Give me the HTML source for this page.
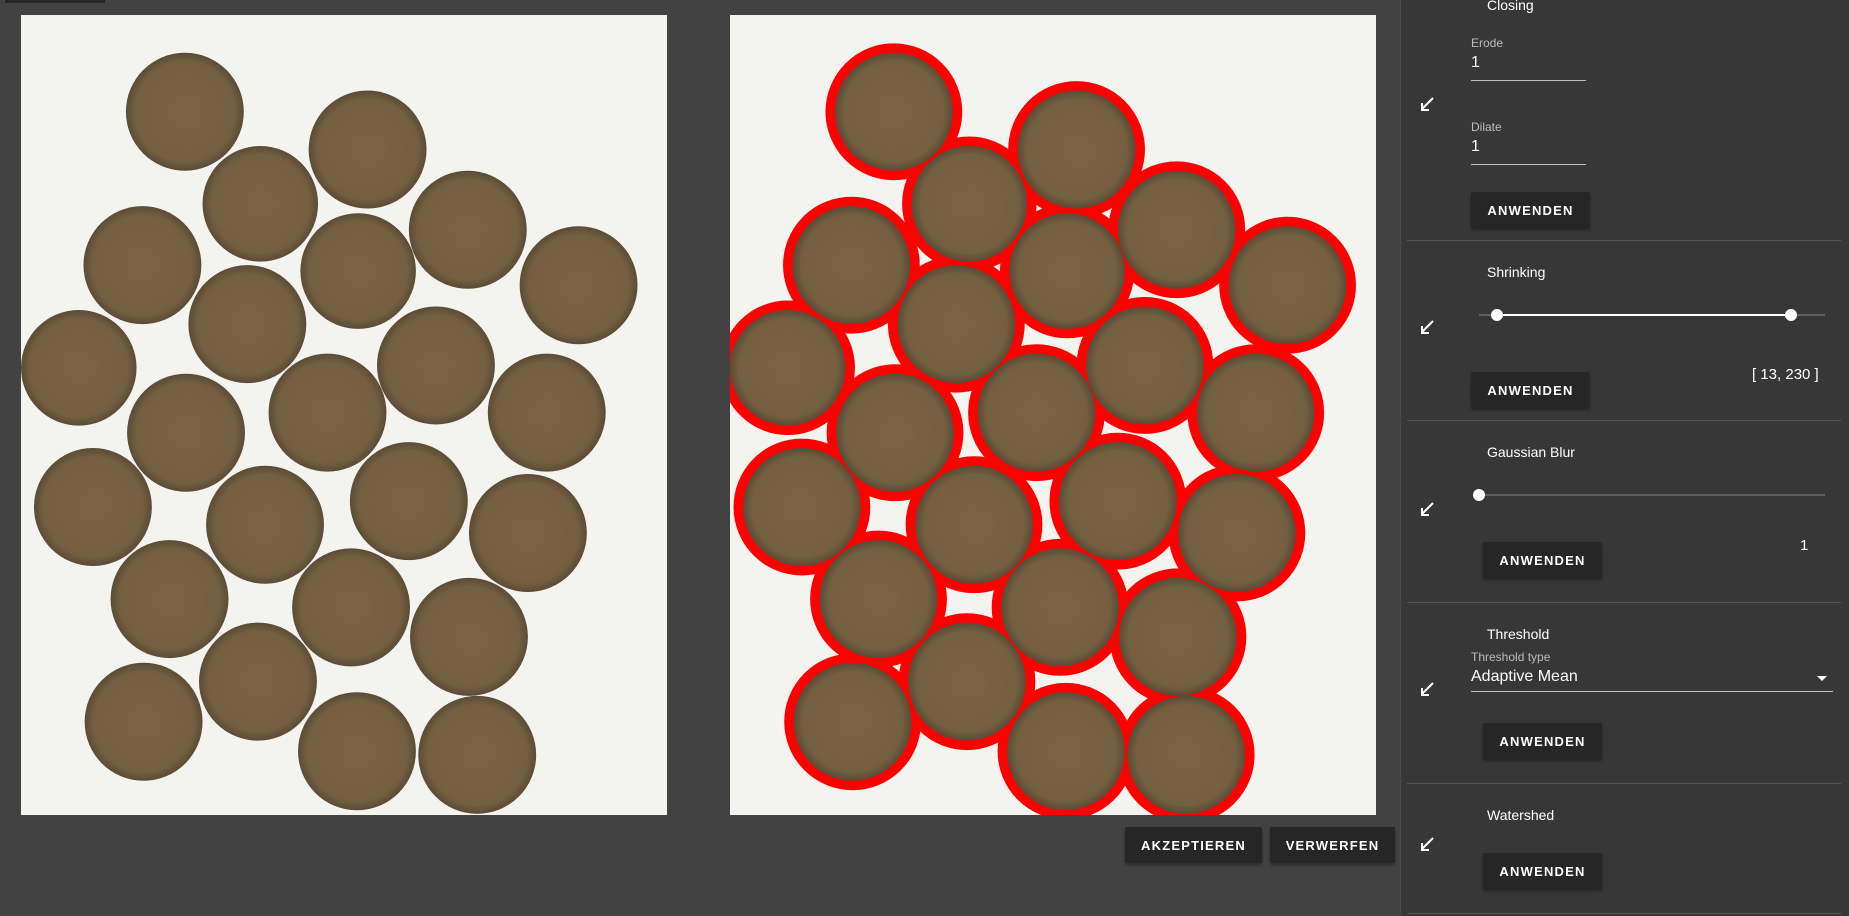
<!DOCTYPE html>
<html><head><meta charset="utf-8">
<style>
*{margin:0;padding:0;box-sizing:border-box}
body{width:1849px;height:916px;overflow:hidden;background:#424242;font-family:"Liberation Sans",sans-serif;color:#fff;position:relative}
.abs{position:absolute}
.img{position:absolute;top:15px;width:646px;height:800px;background:#f3f4ef}
.btn{position:absolute;background:#262626;color:#fff;font-weight:bold;font-size:13px;letter-spacing:1.2px;display:flex;align-items:center;justify-content:center;height:36px;border-radius:2px;box-shadow:0 2px 3px rgba(0,0,0,.35)}
#panel{position:absolute;left:1400px;top:0;width:449px;height:916px;background:#373737;border-left:1px solid #4a4a4a}
.t{position:absolute;font-size:14px;color:#fff}
.lbl{position:absolute;font-size:12px;color:#bdbdbd}
.val{position:absolute;font-size:16px;color:#fff}
.ul{position:absolute;height:1px;background:#bdbdbd}
.div{position:absolute;left:1407px;width:434px;height:1px;background:#555}
.arrow{position:absolute;width:16px;height:16px}
.track{position:absolute;height:2px;background:#5f5f5f}
.thumb{position:absolute;width:12px;height:12px;border-radius:50%;background:#fff}
</style></head><body>
<div class="abs" style="left:5px;top:0;width:100px;height:3px;background:#262626"></div>

<svg width="0" height="0" style="position:absolute">
<defs>
<radialGradient id="cg"><stop offset="0" stop-color="#7a6644"/><stop offset=".85" stop-color="#735f40"/><stop offset="1" stop-color="#5b4b36"/></radialGradient>
<g id="coins">
<circle cx="157" cy="95" r="50"/><circle cx="312" cy="127" r="50"/><circle cx="221" cy="173" r="49"/>
<circle cx="121" cy="225" r="50"/><circle cx="397" cy="195" r="50"/><circle cx="304" cy="230" r="49"/>
<circle cx="491" cy="242" r="50"/><circle cx="210" cy="275" r="50"/><circle cx="67" cy="312" r="49"/>
<circle cx="370" cy="310" r="50"/><circle cx="464" cy="350" r="50"/><circle cx="158" cy="367" r="50"/>
<circle cx="278" cy="350" r="50"/><circle cx="79" cy="430" r="50"/><circle cx="347" cy="425" r="50"/>
<circle cx="225" cy="445" r="50"/><circle cx="448" cy="452" r="50"/><circle cx="144" cy="508" r="50"/>
<circle cx="298" cy="515" r="50"/><circle cx="398" cy="540" r="50"/><circle cx="219" cy="578" r="50"/>
<circle cx="122" cy="612" r="50"/><circle cx="303" cy="637" r="50"/><circle cx="405" cy="640" r="50"/>
</g>
</defs></svg>

<div class="img" style="left:21px">
<svg width="646" height="800" viewBox="18 13 548 678" preserveAspectRatio="none"><use href="#coins" fill="url(#cg)"/></svg>
</div>
<div class="img" style="left:730px">
<svg width="646" height="800" viewBox="18 13 548 678" preserveAspectRatio="none">
<use href="#coins" fill="#f00" stroke="#f00" stroke-width="16"/>
<use href="#coins" fill="url(#cg)"/>
</svg>
</div>

<div class="btn" style="left:1125px;top:827px;width:137px">AKZEPTIEREN</div>
<div class="btn" style="left:1270px;top:827px;width:125px">VERWERFEN</div>
<div class="abs" style="left:1390px;top:827px;width:5px;height:36px;background:#262626"></div>

<div id="panel"></div>

<svg width="0" height="0" style="position:absolute"><defs>
<g id="arr" fill="none" stroke="#fff" stroke-width="2"><path d="M13 1 L2 12"/><path d="M2 6 V13 H9"/></g>
</defs></svg>

<div class="t" style="left:1487px;top:-3px">Closing</div>
<div class="lbl" style="left:1471px;top:36px">Erode</div>
<div class="val" style="left:1471px;top:54px">1</div>
<div class="ul" style="left:1471px;top:80px;width:115px"></div>
<svg class="arrow" style="left:1420px;top:97px"><use href="#arr"/></svg>
<div class="lbl" style="left:1471px;top:120px">Dilate</div>
<div class="val" style="left:1471px;top:138px">1</div>
<div class="ul" style="left:1471px;top:164px;width:115px"></div>
<div class="btn" style="left:1471px;top:192px;width:119px">ANWENDEN</div>
<div class="div" style="top:240px"></div>

<div class="t" style="left:1487px;top:264px">Shrinking</div>
<div class="track" style="left:1479px;top:314px;width:346px"></div>
<div class="track" style="left:1497px;top:314px;width:294px;background:#fff"></div>
<div class="thumb" style="left:1491px;top:309px"></div>
<div class="thumb" style="left:1785px;top:309px"></div>
<svg class="arrow" style="left:1420px;top:320px"><use href="#arr"/></svg>
<div class="val" style="left:1752px;top:366px;font-size:15px">[ 13, 230 ]</div>
<div class="btn" style="left:1471px;top:372px;width:119px">ANWENDEN</div>
<div class="div" style="top:420px"></div>

<div class="t" style="left:1487px;top:444px">Gaussian Blur</div>
<div class="track" style="left:1479px;top:494px;width:346px"></div>
<div class="thumb" style="left:1473px;top:489px"></div>
<svg class="arrow" style="left:1420px;top:502px"><use href="#arr"/></svg>
<div class="val" style="left:1800px;top:537px;font-size:15px">1</div>
<div class="btn" style="left:1483px;top:542px;width:119px">ANWENDEN</div>
<div class="div" style="top:602px"></div>

<div class="t" style="left:1487px;top:626px">Threshold</div>
<div class="lbl" style="left:1471px;top:650px">Threshold type</div>
<div class="val" style="left:1471px;top:668px">Adaptive Mean</div>
<div class="abs" style="left:1817px;top:676px;width:0;height:0;border-left:5px solid transparent;border-right:5px solid transparent;border-top:5px solid #fff"></div>
<div class="ul" style="left:1471px;top:691px;width:362px"></div>
<svg class="arrow" style="left:1420px;top:682px"><use href="#arr"/></svg>
<div class="btn" style="left:1483px;top:723px;width:119px">ANWENDEN</div>
<div class="div" style="top:783px"></div>

<div class="t" style="left:1487px;top:807px">Watershed</div>
<svg class="arrow" style="left:1420px;top:837px"><use href="#arr"/></svg>
<div class="btn" style="left:1483px;top:853px;width:119px">ANWENDEN</div>
<div class="div" style="top:913px"></div>
</body></html>
